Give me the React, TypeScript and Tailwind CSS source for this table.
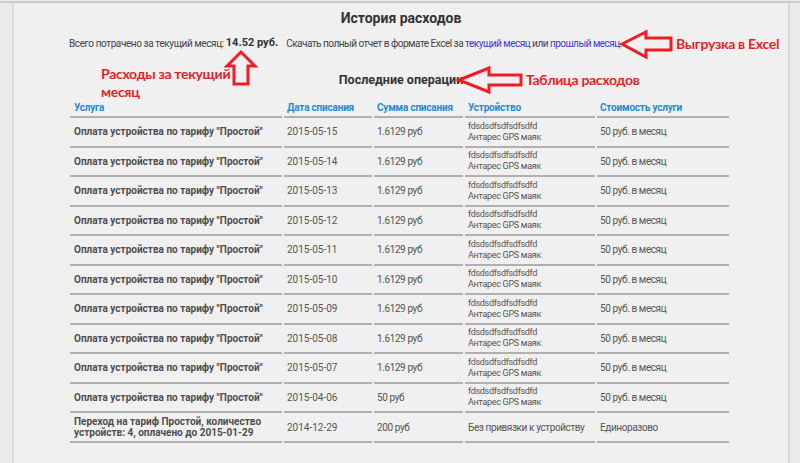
import React from "react";

const rows = [
  ["2015-05-15", "1.6129 руб"],
  ["2015-05-14", "1.6129 руб"],
  ["2015-05-13", "1.6129 руб"],
  ["2015-05-12", "1.6129 руб"],
  ["2015-05-11", "1.6129 руб"],
  ["2015-05-10", "1.6129 руб"],
  ["2015-05-09", "1.6129 руб"],
  ["2015-05-08", "1.6129 руб"],
  ["2015-05-07", "1.6129 руб"],
  ["2015-04-06", "50 руб"],
];

const cellBase =
  "h-[29.5px] border-b-2 border-[#b0b0b0] pl-[3px] pr-0 align-middle text-left whitespace-nowrap overflow-hidden";
const thBase =
  "h-[19px] border-b-2 border-[#b0b0b0] pl-[3px] text-left align-middle font-bold text-[#1f8ad6] whitespace-nowrap tracking-[-0.2px]";
const red = "absolute whitespace-nowrap text-[14px] font-bold leading-[18px] tracking-[-0.3px] text-[#ee1c25]";
const reg = " tracking-[-0.4px]";

export default function App() {
  return (
    <div
      className="relative w-[800px] h-[463px] overflow-hidden bg-[#ebebeb] pt-[1px] text-[10px] text-[#555]"
      style={{ fontFamily: 'Roboto, "Liberation Sans", sans-serif' }}
    >
      <div className="flex h-[462px] border-t-2 border-[#cdcdcd]">
        <div className="w-[12px] shrink-0" />
        <div className="flex-1 border-l-2 border-r-2 border-[#dadada] bg-[#f0f0f0]">
          <div className="flex h-[30px] items-center justify-center text-[14px] font-bold text-[#333]">
            История расходов
          </div>
          <div className="flex h-[20px] items-center whitespace-nowrap pl-[55px] text-[10px] text-[#444]">
            <span className="tracking-[-0.4px]">Всего потрачено за текущий месяц:&nbsp;</span>
            <span className="font-bold text-[11px] text-[#333]">14.52 руб.</span>
            <span className="ml-[8px] tracking-[-0.5px]">
              Скачать полный отчет в формате Excel за{" "}
              <span className="text-[#3a3ad8]">текущий месяц</span> или{" "}
              <span className="text-[#3a3ad8]">прошлый месяц</span>.
            </span>
          </div>
          <div className="mt-[17px] flex h-[20px] items-center justify-center text-[12.5px] font-bold text-[#333]">
            Последние операции
          </div>
          <table className="ml-[54px] mt-[9px] w-[663px] table-fixed border-separate border-spacing-x-[2px] border-spacing-y-0">
            <colgroup>
              <col className="w-[212px]" />
              <col className="w-[88px]" />
              <col className="w-[89px]" />
              <col className="w-[130px]" />
              <col className="w-[132px]" />
            </colgroup>
            <thead>
              <tr>
                <th className={thBase + " pl-[4px]"}>Услуга</th>
                <th className={thBase}>Дата списания</th>
                <th className={thBase}>Сумма списания</th>
                <th className={thBase}>Устройство</th>
                <th className={thBase}>Стоимость услуги</th>
              </tr>
            </thead>
            <tbody>
              {rows.map(([d, s], i) => (
                <tr key={i}>
                  <td className={cellBase + " pl-[4px] font-bold text-[#4d4d4d]"}>Оплата устройства по тарифу "Простой"</td>
                  <td className={cellBase}>{d}</td>
                  <td className={cellBase + reg}>{s}</td>
                  <td className={cellBase + " text-[9px] leading-[11px] tracking-[-0.3px]"}>
                    fdsdsdfsdfsdfsdfd
                    <br />
                    Антарес GPS маяк
                  </td>
                  <td className={cellBase + reg}>50 руб. в месяц</td>
                </tr>
              ))}
              <tr>
                <td className={cellBase + " h-[30px] pl-[4px] font-bold leading-[11px] text-[#4d4d4d]"}>
                  Переход на тариф Простой, количество
                  <br />
                  устройств: 4, оплачено до 2015-01-29
                </td>
                <td className={cellBase}>2014-12-29</td>
                <td className={cellBase + reg}>200 руб</td>
                <td className={cellBase + reg}>Без привязки к устройству</td>
                <td className={cellBase + reg}>Единоразово</td>
              </tr>
            </tbody>
          </table>
        </div>
        <div className="w-[10px] shrink-0" />
      </div>

      <svg className="pointer-events-none absolute left-0 top-0" width="800" height="463">
        <g fill="none" stroke="#ee1c25" strokeWidth="3" strokeLinejoin="miter">
          <polygon points="241,52 255,66 248,66 248,84 234,84 234,66 227,66" />
          <polygon points="622,44 646,32 646,38 671,38 671,50 646,50 646,57" />
          <polygon points="459,80 489,68 489,75 521,75 521,85 489,85 489,92" />
        </g>
      </svg>

      <div className={red + " left-[101px] top-[65px]"} style={{ fontFamily: 'Lato, "Open Sans", sans-serif' }}>
        Расходы за текущий
        <br />
        месяц
      </div>
      <div className={red + " left-[676px] top-[35px]"} style={{ fontFamily: 'Lato, "Open Sans", sans-serif' }}>
        Выгрузка в Excel
      </div>
      <div className={red + " left-[526px] top-[71px]"} style={{ fontFamily: 'Lato, "Open Sans", sans-serif' }}>
        Таблица расходов
      </div>
    </div>
  );
}
